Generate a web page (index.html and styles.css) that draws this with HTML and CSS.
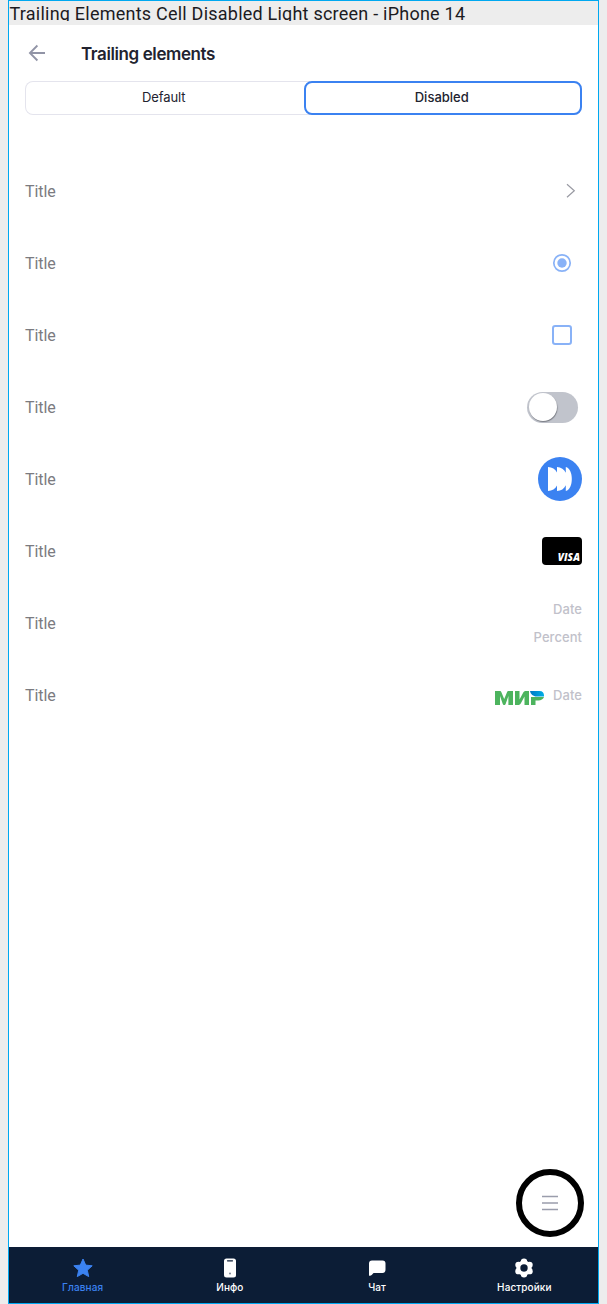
FILE: index.html
```
<!DOCTYPE html>
<html lang="ru">
<head>
<meta charset="utf-8">
<title>Trailing elements</title>
<link rel="stylesheet" href="styles.css">
</head>
<body>
<main class="frame">
  <div class="caption"><div class="caption-text">Trailing Elements Cell Disabled Light screen - iPhone 14</div></div>
  <section class="screen">
    <header class="header">
      <svg class="back" width="24" height="24" viewBox="0 0 24 24" fill="none" stroke="#9194a6" stroke-width="1.8"><path d="M20 12H5M12.4 4.5L4.9 12l7.500 7.500"/></svg>
      <h1 class="heading">Trailing elements</h1>
    </header>
    <div class="tabs">
      <div class="tab">Default</div>
      <div class="tab tab-active">Disabled</div>
    </div>
    <div class="cells">
      <div class="cell"><span class="title">Title</span>
        <svg width="24" height="24" viewBox="0 0 24 24" fill="none" stroke="#999aa3" stroke-width="1.2"><path d="M9 5.200l7.300 6.500L9 18.200"/></svg></div>
      <div class="cell"><span class="title">Title</span>
        <svg width="40" height="40" viewBox="0 0 40 40"><circle cx="20" cy="20" r="8.200" fill="none" stroke="#89b2f7" stroke-width="1.700"/><circle cx="20" cy="20" r="4.700" fill="#89b2f7"/></svg></div>
      <div class="cell"><span class="title">Title</span>
        <svg width="40" height="40" viewBox="0 0 40 40"><rect x="11" y="11" width="18" height="18" rx="2.200" fill="none" stroke="#89b2f7" stroke-width="2"/></svg></div>
      <div class="cell"><span class="title">Title</span><span class="switch"><span class="knob"></span></span></div>
      <div class="cell"><span class="title">Title</span>
        <svg width="44" height="44" viewBox="0 0 44 44"><circle cx="22" cy="22" r="22" fill="#3b82f1"/><path fill="#fff" d="M10 10c4 .2 7.500 2.200 9 5.500V10c4 .2 7.300 2.300 8.800 5.800V10c8 1.500 8 22.500 0 24v-5.800c-1.500 3.500-4.800 5.600-8.800 5.800v-5.500c-1.500 3.300-5 5.300-9 5.500z"/></svg></div>
      <div class="cell"><span class="title">Title</span>
        <div class="card"><span class="visa">VISA</span></div></div>
      <div class="cell"><span class="title">Title</span><div class="details"><span>Date</span><span>Percent</span></div></div>
      <div class="cell"><span class="title">Title</span>
        <div class="payment">
          <svg width="50" height="16" viewBox="0 0 50 16">
            <defs><linearGradient id="wing"><stop offset="0" stop-color="#0077c5"/><stop offset="1" stop-color="#00afe6"/></linearGradient></defs>
            <path fill="#4db45e" d="M0 1h4.600c1 0 1.500.4 1.900 1.500L9.200 9l2.700-6.500C12.300 1.400 12.800 1 13.800 1H18v14h-4.600V6L10.800 13.500c-.4 1-.9 1.500-1.600 1.500s-1.200-.5-1.600-1.500L5 6v9H0zM20 1h4.500v8.500L28 3c.8-1.500 1.500-2 3-2h3v14h-4.500V6.500L26 13c-.8 1.500-1.500 2-3 2h-3zM36 7h13c-.8 2.200-3 3.400-5.500 3.400h-3V15H36z"/>
            <path fill="url(#wing)" d="M35 1h9.500C47.500 1 49 2.800 49 5.500v1H41.500C38.200 6.500 35.500 4 35 1z"/>
          </svg>
          <span>Date</span>
        </div></div>
    </div>
    <div class="fab"><svg width="24" height="24" viewBox="0 0 24 24" stroke="#9a9dac" stroke-width="1.400"><path d="M4 5.500h16M4 12h16M4 18.500h16"/></svg></div>
    <nav class="nav">
      <div class="nav-item selected"><svg width="24" height="24" viewBox="0 0 24 24" fill="currentColor" stroke="currentColor" stroke-linejoin="round"><path d="M12 3l2.700 6.100 6.500.7-4.900 4.400 1.400 6.400L12 17.300l-5.700 3.300 1.400-6.400-4.900-4.400 6.500-.7z"/></svg><span>Главная</span></div>
      <div class="nav-item"><svg width="24" height="24" viewBox="0 0 24 24"><rect x="6" y="2.500" width="12" height="19" rx="2.500" fill="#fff"/><path d="M9.500 4.800h5" stroke="#0c1d36" stroke-width="1.200" stroke-linecap="round"/><circle cx="12" cy="17.500" r="1" fill="#7c8594"/></svg><span>Инфо</span></div>
      <div class="nav-item"><svg width="24" height="24" viewBox="0 0 24 24" fill="#fff"><path d="M7 4.500h10.500c2 0 3 1 3 3v6c0 2-1 3.500-3 3.500H9.500c-1.500 0-1.500.5-2.500 1.800-1 1-2.500 1.400-3 .7V7.500c0-2 1-3 3-3z"/></svg><span>Чат</span></div>
      <div class="nav-item"><svg width="24" height="24" viewBox="0 0 24 24"><g fill="#fff"><circle cx="12" cy="12" r="7.600"/><circle cx="12" cy="5.700" r="3.200"/><circle cx="12" cy="18.300" r="3.200"/><circle cx="6.500" cy="8.850" r="3.200"/><circle cx="17.500" cy="8.850" r="3.200"/><circle cx="6.500" cy="15.150" r="3.200"/><circle cx="17.500" cy="15.150" r="3.200"/></g><circle cx="12" cy="12" r="3.700" fill="#0c1d36"/></svg><span>Настройки</span></div>
    </nav>
  </section>
</main>
</body>
</html>
```

FILE: styles.css
```
* { box-sizing: border-box; }
body { margin: 0; padding-left: 8px; background: #ededed; }
.frame {
  width: 591px; height: 1304px; border: 1px solid #00a8f0;
  display: flex; flex-direction: column;
}
.caption { height: 24px; flex: none; }
.caption-text {
  height: 20px; overflow: hidden; padding-left: 0.5px;
  font: 400 18px/25px Roboto, sans-serif; letter-spacing: 0.23px;
  color: #1c1b1f; white-space: nowrap;
}
.screen {
  flex: 1; display: flex; flex-direction: column; background: #fff;
  font-family: Inter, sans-serif; color: #22232f;
}
.header { height: 56px; padding-left: 16px; display: flex; align-items: center; gap: 32px; }
.back { margin-top: -1px; }
.heading { margin: 0; padding-top: 1px; font: 600 17px/24px Inter, sans-serif; letter-spacing: -0.4px; }
.tabs {
  margin: 0 16px; height: 34px; border-radius: 8px; display: grid;
  grid-template-columns: 1fr 1fr; box-shadow: inset 0 0 0 1px #e4e4ed;
}
.tab {
  text-align: center; font-size: 13px; line-height: 32px;
  letter-spacing: -0.08px; padding-right: 1px;
}
.tab-active {
  border: 2px solid #3b82f1; border-radius: 8px; line-height: 28px;
  font-weight: 500; letter-spacing: 0; background: #fff; padding-right: 2px;
}
.cells { margin-top: 40px; padding: 0 16px; }
.cell {
  height: 72px; display: flex; align-items: center; justify-content: space-between;
  font: 400 16px/24px Roboto, sans-serif; color: #7b7b80;
}
.title { padding-top: 2px; letter-spacing: -0.05px; }
.switch { width: 51px; height: 31px; margin-right: 4px; border-radius: 16px; background: #c1c4cc; padding: 1.500px; }
.knob { display: block; width: 28px; height: 28px; border-radius: 50%; background: #fff; box-shadow: 0.500px 1px 1px #777a82; }
.card {
  width: 40px; height: 28px; border-radius: 4px; background: #000;
  display: flex; align-items: flex-end; justify-content: flex-end; padding: 0 2px 3px 0;
}
.visa { font: italic 800 10px/10px "Open Sans", sans-serif; letter-spacing: 0.1px; color: #fff; }
.details { display: flex; flex-direction: column; align-items: flex-end; gap: 8px; }
.details, .payment { font: 500 13px/20px Inter, sans-serif; letter-spacing: 0.05px; color: #c1c1ca; }
.payment { display: flex; align-items: center; gap: 8px; }
.payment svg { margin-top: 5px; }
.fab {
  width: 68px; height: 68px; border: 6px solid #000; border-radius: 50%;
  margin: auto 14px 10px auto; display: flex; align-items: center; justify-content: center;
}
.nav { height: 56px; background: #0c1d36; display: grid; grid-template-columns: repeat(4, 1fr); }
.nav-item {
  display: flex; flex-direction: column; align-items: center; padding-top: 8.500px;
  font: 500 10px/14px Inter, sans-serif; letter-spacing: 0.1px; color: #fff;
}
.nav-item svg { margin-bottom: 0.500px; }
.selected { color: #3b82f1; }
```
